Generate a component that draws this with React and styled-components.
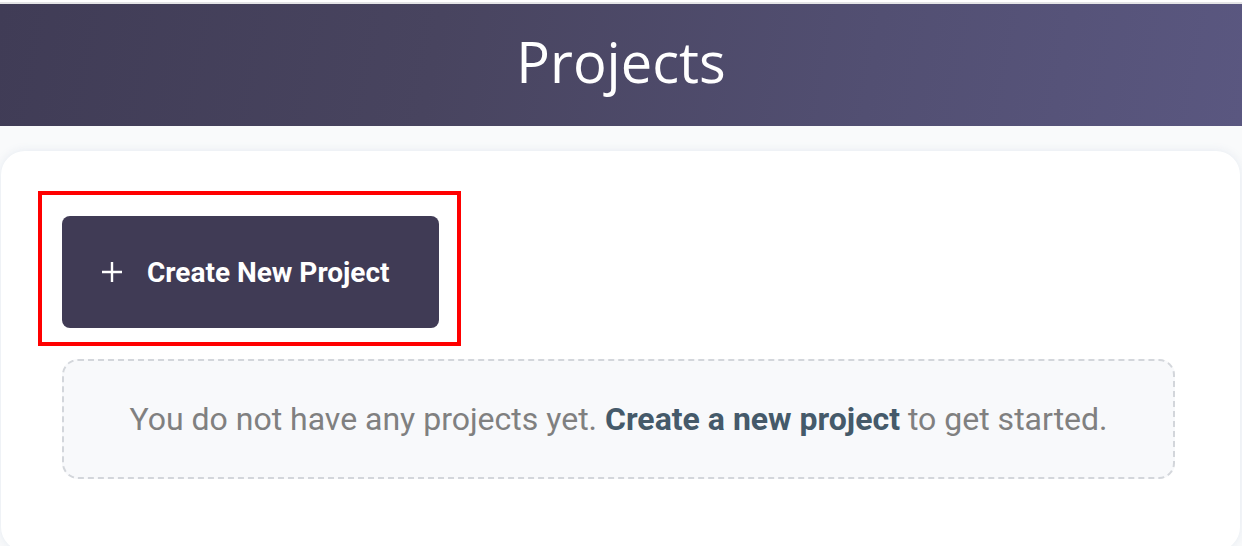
import React from "react";
import styled, { createGlobalStyle } from "styled-components";

const Global = createGlobalStyle`
  html, body { margin: 0; padding: 0; background: #f9fafb; }
  body { font-family: Roboto, "Liberation Sans", sans-serif; }
  * { box-sizing: border-box; }
`;

const Page = styled.div`
  width: 1242px;
  height: 546px;
  overflow: hidden;
  background: #f9fafb;
  border-top: 2px solid #ffffff;
`;

const TopLine = styled.div`
  height: 2px;
  background: #e4e4e6;
`;

const Header = styled.header`
  height: 122px;
  display: flex;
  align-items: center;
  justify-content: center;
  background: linear-gradient(100deg, #403c56 0%, #48445f 35%, #524f72 70%, #5a5780 100%);
`;

const Title = styled.h1`
  margin: 0;
  font-family: "Open Sans", sans-serif;
  font-weight: 400;
  font-size: 56px;
  color: #ffffff;
  line-height: 1;
  transform: translateY(-4px);
`;

const Main = styled.main`
  padding: 25px 2px 0 1px;
`;

const Card = styled.section`
  background: #ffffff;
  border-radius: 24px;
  box-shadow: 0 0 8px rgba(226, 232, 240, 0.9);
  padding: 40px 65px 60px 37px;
  height: 400px;
  display: flex;
  flex-direction: column;
`;

const Highlight = styled.div`
  align-self: flex-start;
  border: 4px solid #ff0000;
  padding: 21px 18px 14px 20px;
`;

const CreateButton = styled.button`
  display: flex;
  align-items: center;
  gap: 24px;
  width: 377px;
  height: 112px;
  padding: 0 0 0 39px;
  border: none;
  border-radius: 8px;
  background: #403b55;
  color: #ffffff;
  font-family: Roboto, sans-serif;
  font-weight: 700;
  font-size: 28px;
  cursor: pointer;
`;

const Empty = styled.div`
  margin: 13px 0 0 24px;
  height: 120px;
  border: 2px dashed #d3d6db;
  border-radius: 16px;
  background: #f8f9fb;
  display: flex;
  align-items: center;
  justify-content: center;
  font-family: Roboto, sans-serif;
  font-size: 32px;
  color: #808080;
`;

const Link = styled.a`
  color: #455a6a;
  font-weight: 700;
  text-decoration: none;
`;

const Plus = () => (
  <svg width="22" height="22" viewBox="0 0 22 22" fill="none" stroke="#fff" strokeWidth="2.4" strokeLinecap="butt">
    <path d="M11 1v20M1 11h20" />
  </svg>
);

export default function App() {
  return (
    <Page>
      <Global />
      <TopLine />
      <Header>
        <Title>Projects</Title>
      </Header>
      <Main>
        <Card>
          <Highlight>
            <CreateButton>
              <Plus />
              Create New Project
            </CreateButton>
          </Highlight>
          <Empty>
            <span>
              You do not have any projects yet. <Link href="#">Create a new project</Link> to get started.
            </span>
          </Empty>
        </Card>
      </Main>
    </Page>
  );
}
